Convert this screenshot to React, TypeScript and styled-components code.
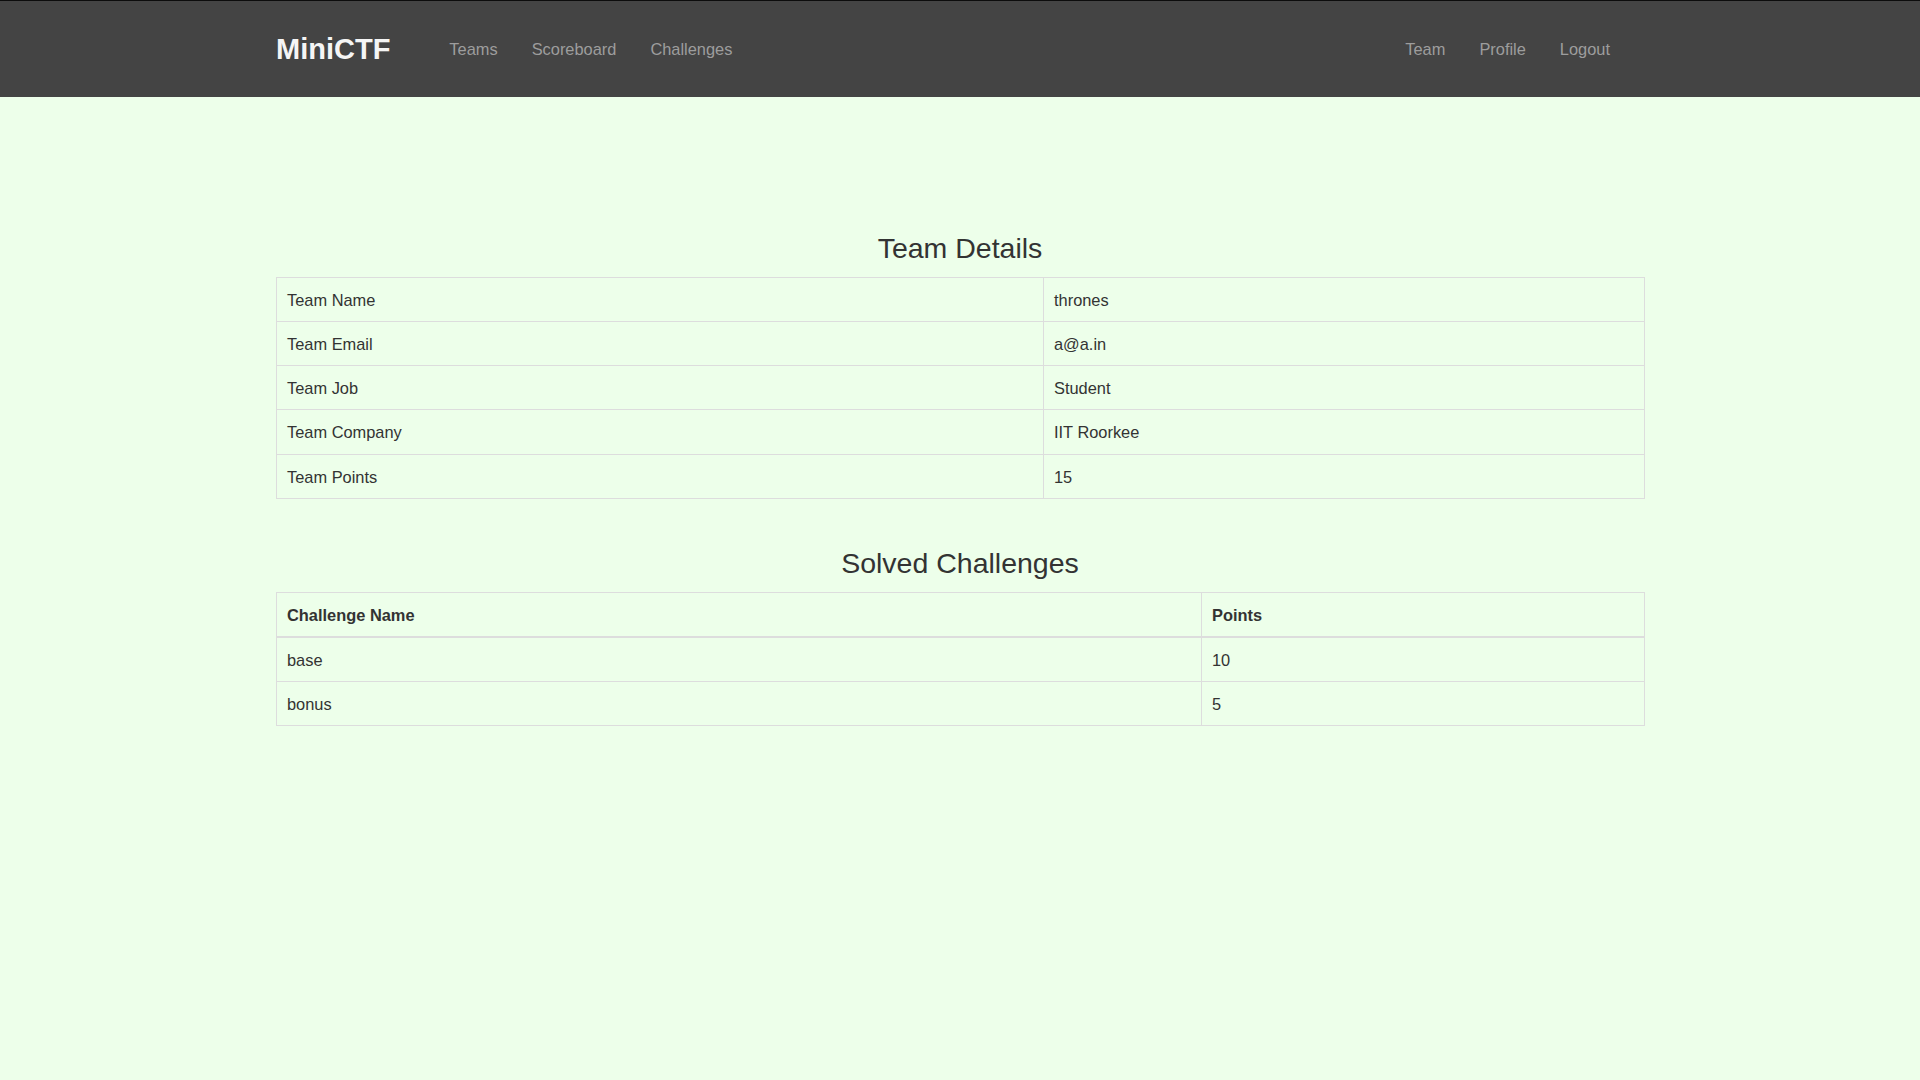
import React from "react";
import styled, { createGlobalStyle } from "styled-components";

const GlobalStyle = createGlobalStyle`
  html, body {
    margin: 0;
    padding: 0;
    background: #edffea;
  }
  body {
    font-family: "Liberation Sans", Arial, Helvetica, sans-serif;
    font-size: 16px;
    line-height: 1.42857;
    color: #333;
    min-height: 1080px;
  }
  * { box-sizing: border-box; }
`;

const Navbar = styled.nav`
  background: #444;
  border-top: 1px solid #0c0c0c;
  height: 97px;
`;

const NavInner = styled.div`
  width: 1368px;
  height: 100%;
  margin: 0 auto;
  padding: 0 17px 0 0;
  display: flex;
  align-items: center;
`;

const Brand = styled.a`
  font-size: 29px;
  font-weight: bold;
  color: #f5f5f5;
  text-decoration: none;
  line-height: 1;
  margin-right: 42px;
`;

const NavList = styled.ul<{ $right?: boolean }>`
  list-style: none;
  margin: 0;
  ${(p) => (p.$right ? "margin-left: auto;" : "")}
  padding: 0;
  display: flex;
  align-items: center;
`;

const NavLink = styled.a`
  display: block;
  padding: 2px 17px 0;
  font-size: 16.4px;
  color: #9d9d9d;
  text-decoration: none;
`;

const Main = styled.main`
  width: 1368px;
  margin: 0 auto;
  padding-top: 87px;
`;

const Heading = styled.h2`
  font-size: 28.5px;
  font-weight: 500;
  line-height: 33px;
  text-align: center;
  margin: 48px 0 12px;
  color: #333;
`;

const Table = styled.table`
  width: 100%;
  table-layout: fixed;
  border-collapse: collapse;
  border: 1px solid #ddd;
  margin-bottom: 20px;
`;

const Cell = styled.td`
  padding: 11px 10px 9px;
  border: 1px solid #ddd;
  text-align: left;
  vertical-align: top;
  line-height: 23.14px;
  font-size: 16.4px;
`;

const HeadCell = styled.th`
  padding: 11px 10px 9px;
  border: 1px solid #ddd;
  border-bottom: 2px solid #ddd;
  text-align: left;
  vertical-align: bottom;
  line-height: 23.14px;
  font-size: 16.4px;
  font-weight: bold;
`;

const Col = styled.col<{ $w: number }>`
  width: ${(p) => p.$w}px;
`;

const details: [string, string][] = [
  ["Team Name", "thrones"],
  ["Team Email", "a@a.in"],
  ["Team Job", "Student"],
  ["Team Company", "IIT Roorkee"],
  ["Team Points", "15"],
];

const solved: [string, string][] = [
  ["base", "10"],
  ["bonus", "5"],
];

export default function App() {
  return (
    <>
      <GlobalStyle />
      <Navbar>
        <NavInner>
          <Brand href="#">MiniCTF</Brand>
          <NavList>
            <li><NavLink href="#">Teams</NavLink></li>
            <li><NavLink href="#">Scoreboard</NavLink></li>
            <li><NavLink href="#">Challenges</NavLink></li>
          </NavList>
          <NavList $right>
            <li><NavLink href="#">Team</NavLink></li>
            <li><NavLink href="#">Profile</NavLink></li>
            <li><NavLink href="#">Logout</NavLink></li>
          </NavList>
        </NavInner>
      </Navbar>
      <Main>
        <Heading>Team Details</Heading>
        <Table>
          <colgroup>
            <Col $w={767} />
            <Col $w={601} />
          </colgroup>
          <tbody>
            {details.map(([k, v]) => (
              <tr key={k}>
                <Cell>{k}</Cell>
                <Cell>{v}</Cell>
              </tr>
            ))}
          </tbody>
        </Table>
        <Heading>Solved Challenges</Heading>
        <Table>
          <colgroup>
            <Col $w={925} />
            <Col $w={443} />
          </colgroup>
          <thead>
            <tr>
              <HeadCell>Challenge Name</HeadCell>
              <HeadCell>Points</HeadCell>
            </tr>
          </thead>
          <tbody>
            {solved.map(([k, v]) => (
              <tr key={k}>
                <Cell>{k}</Cell>
                <Cell>{v}</Cell>
              </tr>
            ))}
          </tbody>
        </Table>
      </Main>
    </>
  );
}
